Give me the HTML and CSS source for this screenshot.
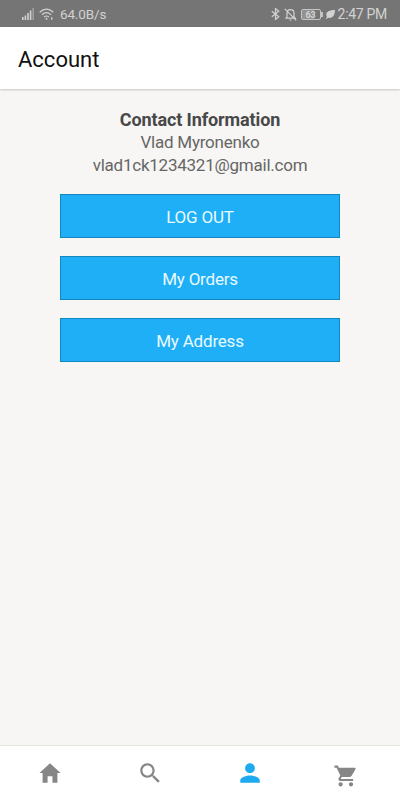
FILE: index.html
```html
<!DOCTYPE html>
<html lang="en">
<head>
  <meta charset="UTF-8">
  <meta name="viewport" content="width=device-width, initial-scale=1.0">
  <title>Account</title>
  <link rel="stylesheet" href="styles.css">
</head>
<body>
  <div class="status-bar">
    <svg class="signal-icon" viewBox="0 0 12 12">
      <path d="M0 9h1.6v3H0zM2.6 7.500h1.600V12H2.600zM5.200 5h1.600v7H5.200zM7.800 2.500h1.600V12H7.800z"/>
      <path class="dim" d="M10.400 0H12v12h-1.600z"/>
    </svg>
    <svg class="wifi-icon" viewBox="0 0 15 12">
      <path d="M.7 4.200Q7.500-2 14.300 4.200M2.900 6.700q4.600-4 9.200 0M5.100 9q2.400-2 4.800 0"/>
      <circle cx="7.500" cy="10.800" r="1"/>
      <path d="M12.800 9v3"/>
    </svg>
    <span class="speed">64.0B/s</span>
    <div class="status-right">
      <svg class="bluetooth-icon" viewBox="0 0 9 12">
        <path d="M.8 3.200l7 5.600L4.500 11.500V.5l3.300 2.700-7 5.600"/>
      </svg>
      <svg class="bell-icon" viewBox="0 0 13 13">
        <path d="M2 10.200h9.200L10 8.500V5.400C10 3 8.700 1.700 6.500 1.700S3 3 3 5.400v3.100zM5.500 12h2M.8.8l11.400 11.600"/>
      </svg>
      <span class="battery">63</span>
      <svg class="leaf-icon" viewBox="0 0 9 9">
        <path d="M9 0C4 .2.400 1.200.300 4.500c0 1 .2 1.700.6 2.300L0 8.400l.7.600 1.400-1.200C7 8.800 8.800 5 9 0z"/>
      </svg>
      <span class="time">2:47 PM</span>
    </div>
  </div>

  <header class="header">
    <h1 class="title">Account</h1>
  </header>

  <main class="content">
    <h2 class="contact-title">Contact Information</h2>
    <p class="contact-line">Vlad Myronenko</p>
    <p class="contact-line">vlad1ck1234321@gmail.com</p>
    <div class="buttons">
      <button class="btn">LOG OUT</button>
      <button class="btn">My Orders</button>
      <button class="btn">My Address</button>
    </div>
  </main>

  <nav class="tab-bar">
    <a class="tab" aria-label="Home">
      <svg viewBox="0 0 512 512"><path d="M208 448V320h96v128h97.600V256H464L256 64 48 256h62.400v192z"/></svg>
    </a>
    <a class="tab" aria-label="Search">
      <svg viewBox="0 0 512 512"><path d="M337.509 305.372h-17.501l-6.571-5.486c20.791-25.232 33.922-57.054 33.922-93.257C347.358 127.632 283.896 64 205.135 64 127.452 64 64 127.632 64 206.629s63.452 142.628 142.225 142.628c35.011 0 67.831-13.167 92.991-34.008l6.561 5.487v17.551L415.180 448 448 415.086 337.509 305.372zm-131.284 0c-54.702 0-98.463-43.887-98.463-98.743 0-54.858 43.761-98.742 98.463-98.742 54.700 0 98.462 43.884 98.462 98.742 0 54.856-43.762 98.743-98.462 98.743z"/></svg>
    </a>
    <a class="tab active" aria-label="Account">
      <svg viewBox="0 0 512 512"><path d="M256 256c52.805 0 96-43.201 96-96s-43.195-96-96-96-96 43.201-96 96 43.195 96 96 96zm0 48c-63.598 0-192 32.402-192 96v48h384v-48c0-63.598-128.402-96-192-96z"/></svg>
    </a>
    <a class="tab cart" aria-label="Cart">
      <svg viewBox="0 0 512 512"><path d="M169.600 377.600c-22.882 0-41.600 18.718-41.600 41.601 0 22.882 18.718 41.600 41.600 41.600s41.601-18.718 41.601-41.600c-.001-22.884-18.720-41.601-41.601-41.601zM48 51.200v41.600h41.600l74.883 151.682-31.308 50.954c-3.118 5.200-5.200 12.482-5.200 19.765 0 27.850 19.025 41.600 44.825 41.600H416v-40H177.893c-3.118 0-5.200-2.082-5.200-5.200 0-1.036 2.207-5.200 2.207-5.200l20.782-32.800h154.954c15.601 0 29.128-8.317 36.400-21.836l74.882-128.800c1.237-2.461 2.082-6.246 2.082-10.400 0-11.446-9.364-19.765-20.800-19.765H135.364L115.600 51.200H48zm326.399 326.400c-22.882 0-41.600 18.718-41.600 41.601 0 22.882 18.718 41.600 41.600 41.600S416 442.082 416 419.201c0-22.884-18.719-41.601-41.601-41.601z"/></svg>
    </a>
  </nav>
</body>
</html>
```

FILE: styles.css
```css
html, body {
  margin: 0;
  padding: 0;
  height: 100%;
  font-family: Roboto, Arial, sans-serif;
  background-color: #f7f6f4;
}
body {
  display: flex;
  flex-direction: column;
  overflow: hidden;
}
.status-bar {
  display: flex;
  align-items: center;
  height: 27px;
  padding: 1px 13px 0 22px;
  box-sizing: border-box;
  background: #757575;
  color: #d2d2d2;
  font-size: 13px;
  flex-shrink: 0;
}
.status-bar svg {
  fill: #d2d2d2;
}
.signal-icon {
  width: 12px;
  height: 12px;
}
.signal-icon .dim {
  opacity: 0.45;
}
.wifi-icon {
  width: 15px;
  height: 12px;
  margin: 0 6px 0 5px;
}
.wifi-icon path,
.bluetooth-icon path,
.bell-icon path {
  fill: none;
  stroke: #d2d2d2;
  stroke-width: 1.2;
}
.speed {
  font-size: 13.5px;
  letter-spacing: -0.15px;
}
.status-right {
  display: flex;
  align-items: center;
  margin-left: auto;
}
.bluetooth-icon {
  width: 9px;
  height: 12px;
  margin-right: 4px;
}
.bell-icon {
  width: 13px;
  height: 13px;
  margin-right: 4px;
}
.battery {
  position: relative;
  width: 20px;
  height: 11px;
  margin-right: 5px;
  box-sizing: border-box;
  border: 1px solid #c4c4c4;
  border-radius: 2px;
  background: linear-gradient(90deg, #929292 65%, transparent 65%);
  font-size: 9px;
  line-height: 10px;
  font-weight: 700;
  text-align: center;
}
.battery::after {
  content: "";
  position: absolute;
  top: 2px;
  right: -3px;
  width: 2px;
  height: 5px;
  background: #c4c4c4;
}
.leaf-icon {
  width: 9px;
  height: 9px;
  margin-right: 3px;
}
.time {
  font-size: 14px;
  letter-spacing: -0.3px;
}
.header {
  display: flex;
  align-items: center;
  height: 62px;
  padding: 2px 18px 0;
  box-sizing: border-box;
  background: #fff;
  box-shadow: 0 1px 2px rgba(0,0,0,0.2);
  flex-shrink: 0;
}
.title {
  margin: 0;
  font-size: 22px;
  font-weight: 400;
  color: #111;
}
.content {
  display: flex;
  flex-direction: column;
  align-items: center;
  flex: 1;
  padding-top: 19px;
  color: #666;
}
.contact-title,
.contact-line {
  margin: 0;
  font-size: 17px;
  line-height: 23px;
  font-weight: 400;
  letter-spacing: -0.24px;
}
.contact-title {
  font-size: 18px;
  font-weight: 700;
  letter-spacing: -0.12px;
  color: #484848;
}
.buttons {
  display: flex;
  flex-direction: column;
  gap: 18px;
  width: 280px;
  margin-top: 17px;
}
.btn {
  height: 44px;
  padding: 1px 0 0;
  border: 1px solid #1286bd;
  background: #1eaff7;
  color: #e9faff;
  font-family: inherit;
  font-size: 17px;
  letter-spacing: -0.2px;
}
.tab-bar {
  display: flex;
  height: 55px;
  box-sizing: border-box;
  border-top: 1px solid #e9e5e1;
  background: #fff;
  flex-shrink: 0;
}
.tab {
  display: flex;
  align-items: center;
  justify-content: center;
  width: 25%;
  box-sizing: border-box;
}
.tab svg {
  width: 26px;
  height: 26px;
  fill: #868686;
}
.tab.active svg {
  fill: #1eaaf1;
}
.tab.cart {
  padding: 5px 11px 0 0;
}
```
